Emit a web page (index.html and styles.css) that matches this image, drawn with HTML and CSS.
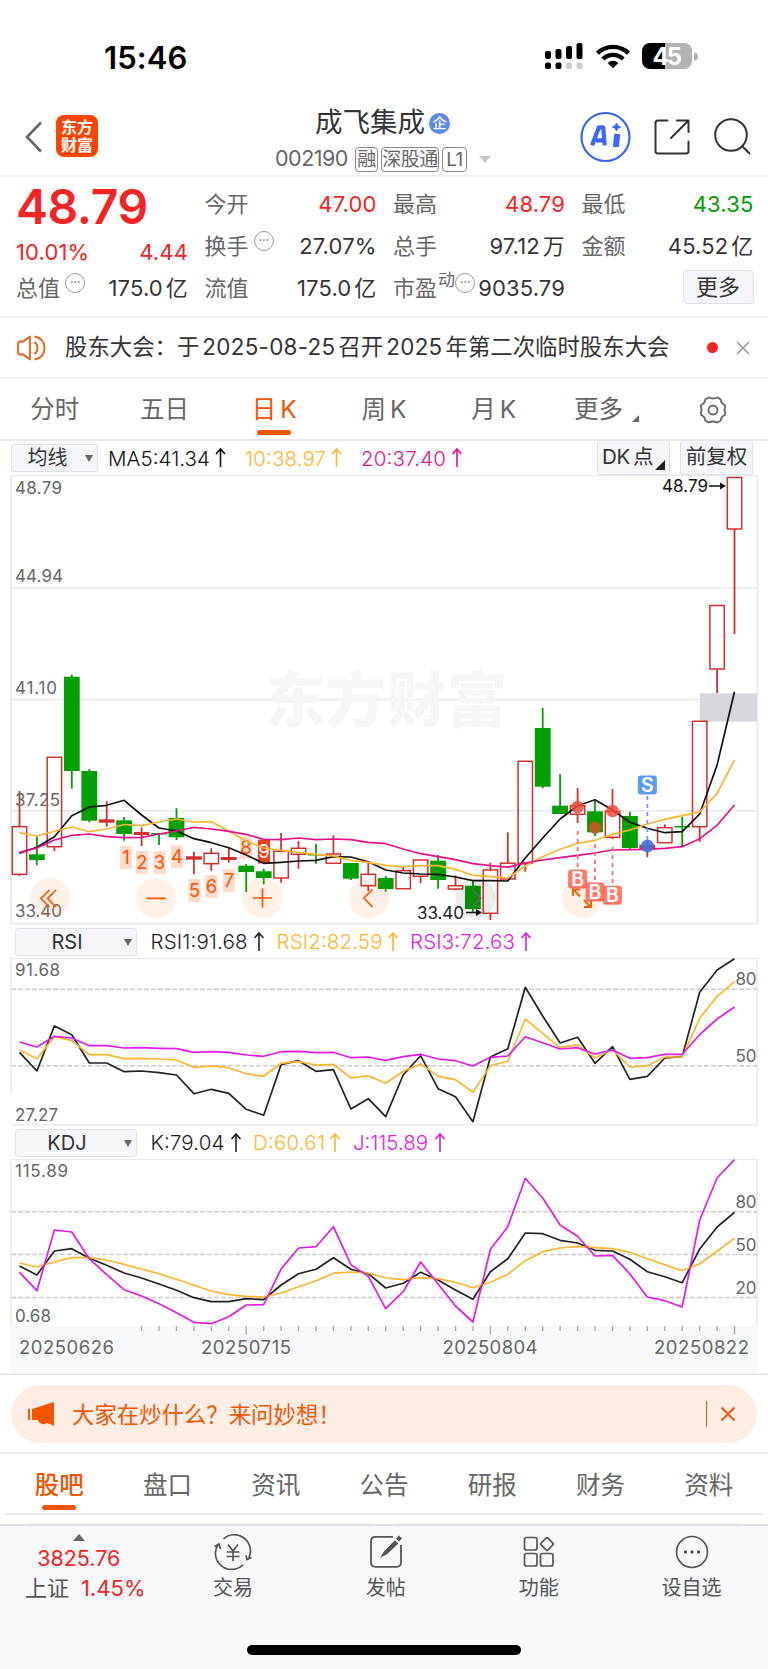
FILE: index.html
```
<!DOCTYPE html>
<html lang="zh-CN">
<head>
<meta charset="utf-8">
<title>成飞集成 002190</title>
<link rel="stylesheet" href="styles.css">
</head>
<body>
<div class="statusbar">
  <span class="clock">15:46</span>
  <svg class="status-icons" width="154" height="30" viewBox="544 41 154 30">
    <g fill="#000"><rect x="545" y="51" width="6" height="8" rx="2"/><rect x="555.5" y="49" width="6" height="10" rx="2"/><rect x="566" y="46" width="6" height="13" rx="2"/><rect x="576.5" y="43" width="6" height="16" rx="2"/><rect x="545" y="62.500" width="6" height="6.500" rx="2"/><rect x="555.500" y="62.500" width="6" height="6.500" rx="2"/></g>
    <g fill="#ccc"><rect x="566" y="62.500" width="6" height="6.500" rx="2"/><rect x="576.500" y="62.500" width="6" height="6.500" rx="2"/></g>
    <g fill="none" stroke="#000" stroke-width="4.300"><path d="M597.500 53.200a22.300 22.300 0 0 1 31 0"/><path d="M602.800 59a14.500 14.500 0 0 1 20.400 0"/></g>
    <path d="M613 68.300l-5.300-5.300a7.500 7.500 0 0 1 10.600 0z"/>
    <path d="M665 43h-15a8 8 0 0 0-8 8v10a8 8 0 0 0 8 8h15z"/>
    <path d="M665 43h19a8 8 0 0 1 8 8v10a8 8 0 0 1-8 8h-19z" fill="#b3b3b3"/>
    <path d="M694 52.500a4 4 0 0 1 0 8z" fill="#b3b3b3"/>
    <text x="652.500" y="65" class="battery" textLength="29.500">45</text>
  </svg>
</div>

<header class="header">
  <svg class="back" width="18" height="32" viewBox="0 0 18 32"><path d="M16 1.500L2 16l14 14.500" fill="none" stroke="#666" stroke-width="2.600"/></svg>
  <div class="logo"><span>东方</span><span>财富</span></div>
  <div class="title">
    <div class="name">成飞集成<span class="badge">企</span></div>
    <div class="code"><span class="num">002190</span><span class="tag t1">融</span><span class="tag t2">深股通</span><span class="tag t3">L1</span><i class="caret"></i></div>
  </div>
  <svg class="actions" width="180" height="56" viewBox="578 109 180 56" fill="none">
    <circle cx="605.500" cy="137" r="24" stroke="#3a66ff" stroke-width="2.200"/>
    <path d="M592 145.300l7-18h4.200l1.500 18M596 140.300h8.500" stroke="#3a66ff" stroke-width="4.200" stroke-linejoin="round"/>
    <path d="M617.300 134l-1.500 13" stroke="#3a66ff" stroke-width="6"/>
    <path d="M616.500 123l1.300 2.700 2.700 1.300-2.700 1.300-1.300 2.700-1.300-2.700-2.700-1.300 2.700-1.300z" fill="#3a66ff" stroke="#3a66ff"/>
    <g stroke="#333" stroke-width="2" stroke-linecap="round" stroke-linejoin="round"><path d="M667.500 120.500H658q-2.500 0-2.500 2.500v28q0 2.500 2.500 2.500h28q2.500 0 2.500-2.500v-9.500"/><path d="M677 120.500h11.500v11.500M688 121l-17 17"/><circle cx="731" cy="135" r="15.800"/><path d="M742.500 146.500l7 7"/></g>
  </svg>
</header>

<section class="quote">
  <div class="col first">
    <strong class="price">48.79</strong>
    <div class="pair up chg"><span>10.01%</span><span>4.44</span></div>
    <div class="pair last"><label>总值<i class="more-dot">···</i></label><span>175.0<u>亿</u></span></div>
  </div>
  <div class="col">
    <div class="pair up"><label>今开</label><span>47.00</span></div>
    <div class="pair"><label>换手<i class="more-dot">···</i></label><span>27.07%</span></div>
    <div class="pair"><label>流值</label><span>175.0<u>亿</u></span></div>
  </div>
  <div class="col">
    <div class="pair up"><label>最高</label><span>48.79</span></div>
    <div class="pair"><label>总手</label><span>97.12<u>万</u></span></div>
    <div class="pair"><label>市盈<sup>动</sup><i class="more-dot tight">···</i></label><span>9035.79</span></div>
  </div>
  <div class="col">
    <div class="pair down"><label>最低</label><span>43.35</span></div>
    <div class="pair"><label>金额</label><span>45.52<u>亿</u></span></div>
    <div class="pair end"><button class="more">更多</button></div>
  </div>
</section>

<section class="notice">
  <svg width="32" height="28" viewBox="0 0 32 28" fill="none" stroke="#f05a0a" stroke-width="1.800" stroke-linejoin="round"><path d="M14 2.500L7.500 7.500H4.500q-2.500 0-2.500 2.500v8q0 2.500 2.500 2.500h3L14 25.500z"/><path d="M18.500 8q3 2 3 6t-3 6M18.500 2.500q10 1.500 10 11.500t-10 11.500"/></svg>
  <span class="notice-text">股东大会：于<b>2025-08-25</b>召开<b>2025</b>年第二次临时股东大会</span>
  <i class="red-dot"></i>
  <svg class="close" width="14" height="14" viewBox="0 0 14 14"><path d="M1 1l12 12M13 1L1 13" stroke="#999" stroke-width="1.600"/></svg>
</section>

<nav class="periods">
  <span>分时</span><span>五日</span><span class="on">日<b>K</b></span><span>周<b>K</b></span><span>月<b>K</b></span><span class="shift">更多<i class="corner"></i></span>
  <span><svg width="30" height="28" viewBox="-15 -14 30 28" fill="none" stroke="#666" stroke-width="1.800" stroke-linejoin="round"><path d="M-4.500-12.500Q0-10.500 4.500-12.500L7.800-10.500Q8-6.500 12-4.800V-1.500Q10.500 0 12 1.500V4.800Q8 6.500 7.800 10.500L4.500 12.500Q0 10.500-4.500 12.500L-7.800 10.500Q-8 6.500-12 4.800V1.500Q-10.500 0-12-1.500V-4.800Q-8-6.500-7.800-10.500z"/><circle r="4.500"/></svg></span>
</nav>

<div class="indicator ma">
  <button class="picker short">均线<i></i></button>
  <svg width="400" height="34" viewBox="100 441 400 34" class="values"><text x="108" y="465.500" fill="#111" textLength="102">MA5:41.34</text><text x="245" y="465.500" fill="#fdb52e" textLength="81">10:38.97</text><text x="361" y="465.500" fill="#e60f8e" textLength="85">20:37.40</text><g fill="none" stroke-width="1.600"><path d="M220.500 467v-18M216 454l4.500-5 4.500 5" stroke="#111"/><path d="M336.500 467v-18M332 454l4.500-5 4.500 5" stroke="#fdb52e"/><path d="M457 467v-18M452.500 454l4.500-5 4.500 5" stroke="#e60f8e"/></g></svg>
  <button class="chip dk">DK<span>点</span><i></i></button>
  <button class="chip">前复权</button>
</div>
<svg id="kline" class="chart" width="768" height="450" viewBox="0 475 768 450"></svg>

<div class="indicator">
  <button class="picker">RSI<i></i></button>
  <svg width="420" height="33" viewBox="140 925 420 33" class="values"><text x="150.500" y="948.500" fill="#222" textLength="97">RSI1:91.68</text><text x="276.500" y="948.500" fill="#fdb52e" textLength="106">RSI2:82.59</text><text x="410" y="948.500" fill="#dd1ae6" textLength="105">RSI3:72.63</text><g fill="none" stroke-width="1.600"><path d="M259 951v-18M254.500 938l4.500-5 4.500 5" stroke="#222"/><path d="M393 951v-18M388.500 938l4.500-5 4.500 5" stroke="#fdb52e"/><path d="M526 951v-18M521.500 938l4.500-5 4.500 5" stroke="#dd1ae6"/></g></svg>
</div>
<svg id="rsi" class="chart" width="768" height="168" viewBox="0 958 768 168"></svg>

<div class="indicator">
  <button class="picker">KDJ<i></i></button>
  <svg width="420" height="33" viewBox="140 1126 420 33" class="values"><text x="150.500" y="1149.500" fill="#222" textLength="74">K:79.04</text><text x="253" y="1149.500" fill="#fdb52e" textLength="72">D:60.61</text><text x="353" y="1149.500" fill="#dd1ae6" textLength="75">J:115.89</text><g fill="none" stroke-width="1.600"><path d="M236 1152v-18M231.500 1139l4.500-5 4.500 5" stroke="#222"/><path d="M335 1152v-18M330.500 1139l4.500-5 4.500 5" stroke="#fdb52e"/><path d="M440 1152v-18M435.500 1139l4.500-5 4.500 5" stroke="#dd1ae6"/></g></svg>
</div>
<svg id="kdj" class="chart" width="768" height="216" viewBox="0 1159 768 216"></svg>

<div class="ask-wrap"><div class="ask">
  <svg width="28" height="24" viewBox="0 0 28 24" fill="#f05500"><path d="M1 7h2v11H1zM5 7l22-7v24l-4-2-3-1q-4 3-8-1l-1-2H5z"/></svg>
  <span class="ask-text">大家在炒什么？来问妙想！</span>
  <i class="bar"></i>
  <svg width="16" height="16" viewBox="0 0 16 16"><path d="M1.500 1.500l13 13M14.500 1.500l-13 13" stroke="#f05500" stroke-width="1.800"/></svg>
</div></div>

<nav class="tabs"><span class="on">股吧</span><span>盘口</span><span>资讯</span><span>公告</span><span>研报</span><span>财务</span><span>资料</span></nav>
<div class="peek"><i></i><i></i></div>

<footer class="bottom">
  <div class="index"><i class="tri"></i><span class="up">3825.76</span><span class="idx"><em>上证</em><span class="up">1.45%</span></span></div>
  <div class="item"><svg width="40" height="36" viewBox="-20 -18 40 36" fill="none" stroke="#555" stroke-width="1.700"><path d="M-9.500-13.200A16.200 16.200 0 0 1 15.800 6M10 12.800A16.200 16.200 0 0 1-15-7.500M-18.500-5.500l4.500-2.500 1.500 5M18.500 5.500l-4.500 2-1-4"/><path d="M-5-7.500l5 6.500 5-6.500M0-1v10M-6.500 0h13M-6.500 4.500h13"/></svg><span>交易</span></div>
  <div class="item"><svg width="40" height="36" viewBox="-20 -18 40 36" fill="none" stroke="#555" stroke-width="1.800"><path d="M7-15.200h-17.500q-4.500 0-4.500 4.500v21q0 4.500 4.500 4.500h21q4.500 0 4.500-4.500V-7"/><path d="M-3.500 3.500L-1-.500 9-10.500l2 2L.500 1.500z" fill="#555"/><path d="M11.500-12l3-3" stroke-width="4"/></svg><span>发帖</span></div>
  <div class="item"><svg width="40" height="36" viewBox="-20 -18 40 36" fill="none" stroke="#555" stroke-width="1.700"><rect x="-14.500" y="-14.500" width="12.500" height="12.500" rx="2"/><rect x="-14.500" y="1.500" width="12.500" height="12.500" rx="2"/><rect x="1.500" y="1.500" width="12.500" height="12.500" rx="2"/><rect x="-4.800" y="-4.800" width="9.600" height="9.600" rx="1" transform="translate(8 -8) rotate(45)"/></svg><span>功能</span></div>
  <div class="item"><svg width="40" height="36" viewBox="-20 -18 40 36" fill="none" stroke="#555" stroke-width="1.700"><circle r="15.500"/><g fill="#555" stroke="none"><circle cx="-6.500" r="1.700"/><circle r="1.700"/><circle cx="6.500" r="1.700"/></g></svg><span>设自选</span></div>
  <i class="home"></i>
</footer>
<script src="chart.js"></script>
</body>
</html>
```

FILE: styles.css
```
* { box-sizing: border-box; }
body { margin: 0; width: 768px; background: #fff; color: #333; font-family: Inter, "Noto Sans CJK SC", sans-serif; font-size: 22px; line-height: 1; }
i, em { font-style: normal; }
b { font-weight: 400; }
u { text-decoration: none; margin-left: 3px; }
svg { display: block; flex: none; }
button { font: inherit; color: #333; padding: 0; background: #f5f6f9; border: 1px solid #dfe1e8; border-radius: 3px; line-height: 1; display: flex; align-items: center; justify-content: center; }
.up { color: #f52323; }
.down { color: #00a000; }

.statusbar { height: 101px; padding: 41px 70px 0 104px; display: flex; justify-content: space-between; }
.clock { font-size: 31px; font-weight: 600; color: #000; letter-spacing: .1px; line-height: 33px; }
.battery { font: 700 24px Inter, sans-serif; fill: #fff; }

.header { height: 76px; border-bottom: 2px solid #efefef; display: flex; padding: 0 10px 0 25px; }
.back { margin: 20px 13px 0 0; }
.logo { width: 42px; height: 42px; margin-top: 14px; border-radius: 8px; background: #ff4400; color: #fff; font-size: 16px; font-weight: 700; display: flex; flex-direction: column; align-items: center; justify-content: center; gap: 2px; }
.title { flex: 1; padding-left: 4px; display: flex; flex-direction: column; align-items: flex-start; }
.name { margin: 6px 0 0 213px; font-size: 27.5px; height: 32px; display: flex; align-items: center; }
.badge { width: 21px; height: 21px; border-radius: 50%; background: #5d8ce4; color: #fff; font-size: 14px; font-weight: 500; display: flex; align-items: center; justify-content: center; margin-left: 4px; }
.code { margin: 7px 0 0 173px; display: flex; align-items: center; height: 26px; color: #666; font-size: 21.5px; }
.num { width: 80px; letter-spacing: -0.5px; }
.tag { height: 25px; border: 1.500px solid #888; border-radius: 4px; font-size: 19px; display: flex; align-items: center; justify-content: center; margin-right: 3px; letter-spacing: -.5px; white-space: nowrap; }
.t1 { width: 23px; } .t2 { width: 58px; } .t3 { width: 25px; }
.caret { margin-left: 9px; border: 6px solid transparent; border-top: 7px solid #c8c8c8; border-bottom: 0; }
.actions { margin-top: 8px; }

.quote { height: 141px; border-bottom: 2px solid #f1f1f1; padding: 6px 15px 0 16px; display: grid; grid-template-columns: 172px 172px 172px 172px; column-gap: 16.500px; }
.pair { height: 42px; display: flex; justify-content: space-between; align-items: center; letter-spacing: .15px; white-space: nowrap; }
.pair label { color: #666; letter-spacing: 0; display: flex; align-items: center; }
.price { display: block; height: 48px; font-size: 48px; font-weight: 600; color: #f52323; letter-spacing: -.400px; line-height: 48px; }
.chg { height: 42px; }
.last { height: 28px; margin-top: 1px; }
.more-dot { flex: none; width: 20px; height: 20px; border: 1.500px solid #999; border-radius: 50%; margin: -10px 0 0 5px; font-size: 14px; line-height: 15px; letter-spacing: -.5px; color: #777; display: flex; justify-content: center; }
.more-dot.tight { margin-left: 0; }
sup { font-size: 17px; line-height: 1; margin: -16px 0 0 1px; vertical-align: baseline; }
.pair.end { justify-content: flex-end; }
.more { width: 71px; height: 34px; border-radius: 4px; margin-top: -2px; }

.notice { height: 61px; border-bottom: 2px solid #f0f0f0; display: flex; align-items: center; padding: 0 18px 0 16px; }
.notice-text { margin-left: 17px; width: 642px; font-size: 22.400px; white-space: nowrap; }
.notice-text b { margin: 0 3px; letter-spacing: .3px; }
.red-dot { width: 11px; height: 11px; border-radius: 50%; background: #f52323; margin-right: 18px; flex: none; }

.periods { height: 62px; border-bottom: 2px solid #e6e6ec; display: grid; grid-template-columns: repeat(7, 1fr); }
.periods span { height: 61px; display: flex; align-items: center; justify-content: center; font-size: 24.500px; color: #666; position: relative; }
.periods .shift { padding-left: 6px; }
.periods b { margin-left: 4px; }
.periods .on, .tabs .on { color: #f05500; }
.periods .on::after, .tabs .on::after { content: ""; position: absolute; bottom: 5px; left: 50%; width: 34px; height: 5px; margin-left: -17px; border-radius: 3px; background: #f05500; }
.corner { border-left: 7px solid transparent; border-bottom: 7px solid #666; margin: 18px 0 0 9px; }

.indicator { height: 33px; display: flex; padding-left: 15px; }
.indicator.ma { height: 34px; padding-left: 11px; }
.picker { width: 122px; height: 28px; margin-top: 3px; font-size: 20px; position: relative; padding-right: 18px; }
.picker.short { width: 87px; padding-right: 14px; }
.picker i { position: absolute; right: 4px; top: 10px; border: 4.500px solid transparent; border-top: 7px solid #666; border-bottom: 0; }
.indicator .values { margin-left: 3px; }
.ma .values { margin-left: 2px; width: 400px; }
.values text { font: 350 20.500px Inter, sans-serif; }
.chip { height: 34px; width: 73px; font-size: 20.500px; border-top: 0; position: relative; white-space: nowrap; }
.chip.dk { margin: 0 10px 0 97px; padding-right: 12px; letter-spacing: -.3px; }
.chip span { margin-left: 3px; }
.chip i { position: absolute; right: 4px; bottom: 4px; border-left: 10px solid transparent; border-bottom: 10px solid #222; }
.chart text { font-family: Inter, sans-serif; }
.watermark { font-family: "Noto Sans CJK SC", sans-serif !important; font-weight: 900; font-size: 60px; fill: #f6f6f6; }

.ask-wrap { height: 79px; padding: 10px 11px 0; border-bottom: 2px solid #ececec; }
.ask { height: 58px; border-radius: 29px; background: #feede5; display: flex; align-items: center; padding: 0 21px 0 16px; color: #f05500; }
.ask-text { margin-left: 17px; flex: 1; font-size: 22.400px; margin-top: 3px; }
.bar { width: 1px; height: 26px; background: #f05500; margin-right: 13px; }
.tabs { height: 61px; margin: 0 5px; border-bottom: 2px solid #eaeaec; display: flex; }
.tabs span { flex: 1; display: flex; align-items: center; justify-content: center; font-size: 24.500px; color: #666; position: relative; padding-top: 3px; }
.tabs .on { font-weight: 500; }
.tabs .on::after { bottom: 3px; }
.peek { height: 9px; padding: 8px 26px 0; display: flex; gap: 20px; }
.peek i { flex: 1; height: 1px; background: #ffe9e2; }

.bottom { height: 145px; border-top: 2px solid #dfe1e8; background: #f7f8fa; display: grid; grid-template-columns: 156.500px repeat(4, 152.900px); position: relative; }
.index { display: flex; flex-direction: column; align-items: center; padding: 8px 0 0 1px; }
.tri { border: 6px solid transparent; border-bottom: 7px solid #666; border-top: 0; }
.index > .up { margin-top: 7px; font-size: 21.500px; height: 29px; }
.idx { display: flex; gap: 12px; white-space: nowrap; padding-left: 13px; }
.idx em { color: #555; }
.item { display: flex; flex-direction: column; align-items: center; padding-top: 8px; color: #555; font-size: 20px; gap: 8px; }
.home { position: absolute; left: 247px; top: 119px; width: 274px; height: 10px; border-radius: 5px; background: #000; }
```

FILE: chart.js
```
const X0 = 19.5, STEP = 17.44;
const px = i => +(X0 + i * STEP).toFixed(1);
const RED = '#d22f2f', GREEN = '#00a000';
const line = (ys, color, f = y => y) =>
  `<polyline fill="none" stroke="${color}" stroke-width="1.7" stroke-linejoin="round" points="${ys.map((y, i) => px(i) + ',' + f(y).toFixed(1)).join(' ')}"/>`;
const label = (x, y, s, w, size = 17, fill = '#666') =>
  `<text x="${x}" y="${y}" font-size="${size}" fill="${fill}" textLength="${w}">${s}</text>`;

// kind, body top, body bottom, wick top, wick bottom
const candles = [
  ['r',826.7,874.3,791,876],['g',854.3,860,836.7,865.3],['r',757.3,846.7,757,851],['g',676.7,771,674.7,788.7],
  ['g',771,820.7,769,822.3],['x',819.3,822.7,801.3,826.7],['g',820.3,834,817,840.7],['x',832,835,827.3,846],
  ['g',833,834.5,833,845],['g',818,837.3,808.3,840],['x',856.3,859.7,851.7,874.3],['r',853.3,863.7,848.3,870.7],
  ['x',857,860,847.7,862.7],['g',865.7,872,864,892],['g',871.3,878,868.7,884.3],['r',851.3,878,833,882.7],
  ['r',848.3,854.3,840.7,868.7],['g',854,855.5,843.7,863.7],['r',854,863.3,835.3,863],['g',863,878.7,863,880],
  ['r',874.3,885.7,862,891.3],['g',878,889,876,891.7],['r',870.7,888.7,866.7,888],['r',860,876.3,860,883.3],
  ['g',860.7,880,855,888.7],['r',885.7,889,875.3,890.3],['g',885.7,909,880.7,911.7],['r',870,913.3,862.7,920],
  ['r',863.2,879,832.3,879],['r',761.3,863.3,761.3,871.7],['g',728,786.7,708,788.3],['g',805.7,814,774,814],
  ['r',805.7,814.3,788,823],['g',811.3,832.3,800.7,836],['r',811.3,837.3,789,839],['g',816,848,811.7,849],
  ['x',844.7,849,841,857.3],['r',827.7,842.7,824.3,842],['g',826,827.5,816.7,846.7],['r',721.3,826.7,721,842],
  ['r',605.5,669,605.5,693],['r',477.5,529,477.5,634]
];
const ma5 = [853.3,847.3,836.7,815.7,807,805.3,800.3,815,828,831,838.7,842.7,847.7,855,863.3,862.3,861,860.3,856.7,857,861.7,870,873,874,874.3,877,880.7,880.7,881,858,838,819,805.7,799.7,810,822.3,828.3,832.7,831.7,814,765,691.7];
const ma10 = [832.7,836,831.3,827,831.7,829,824.5,825.7,822,819,822,821.7,831,841,848,850.3,852.3,854.3,856,860.3,862.3,865.3,866.7,865.7,865.7,869.3,875.3,876.7,878,866,856.7,849.3,843.3,840.3,834.3,830,824,819.3,815.7,812,793.3,760];
const ma20 = [852.3,848,840,835.3,834,836.7,837.7,837.3,834,831,827.3,829,831.3,834.3,839.3,839.7,838,839.7,839,839.7,842.3,843.7,849,853.7,856.7,859.7,863.7,865.7,867.2,863,860,857.7,855.3,853,850,849.7,849.3,848.3,846.7,838.7,825.3,805];

let k = '<g fill="none" stroke="#e6e8ee" stroke-width="1.5"><rect x="11" y="475.500" width="746.500" height="448"/><path d="M11 588H757M11 699.500H757M11 810.700H757"/></g>';
k += '<text x="265" y="722" class="watermark" textLength="242">东方财富</text>';
k += '<rect x="700" y="693.300" width="57" height="28.300" fill="#d4d7dc"/>';
candles.forEach(([t, a, b, w, z], i) => {
  const x = px(i);
  if (t === 'r') {
    k += `<path d="M${x} ${w}V${a}M${x} ${b}V${Math.max(z, b)}" stroke="${RED}" stroke-width="1.8"/>`;
    k += `<rect x="${x - 7.2}" y="${a}" width="14.4" height="${b - a}" fill="none" stroke="${RED}" stroke-width="1.5"/>`;
  } else {
    const c = t === 'g' ? GREEN : RED;
    k += `<path d="M${x} ${w}V${z}" stroke="${c}" stroke-width="1.8"/><rect x="${x - 7.9}" y="${a}" width="15.8" height="${b - a}" fill="${c}"/>`;
  }
});
[['48.79', 494, 47], ['44.94', 582, 48], ['41.10', 693.5, 42], ['37.25', 805.5, 45], ['33.40', 917, 47]].forEach(([s, y, w]) => k += label(15, y, s, w));

// nine-turn counters
[[1,126,848],[2,142,853],[3,159.500,853],[4,177,847],[5,194.500,881],[6,211.500,877],[7,229,871],[8,246,838]].forEach(([n, x, t]) => {
  k += `<rect x="${x - 6}" y="${t - 2}" width="12" height="23" fill="#ffdccb"/><text x="${x}" y="${t + 16}" font-size="18.500" fill="#ff5000" text-anchor="middle">${n}</text>`;
});
k += '<rect x="258" y="839.500" width="12" height="24" fill="#ea4317"/><text x="264" y="858" font-size="18.500" fill="#fff" text-anchor="middle">9</text>';
k += line(ma5, '#111') + line(ma10, '#fdb52e') + line(ma20, '#e6108e');

// round overlay controls
[50, 156, 262.500, 369, 582].forEach(x => k += `<circle cx="${x}" cy="898" r="20" fill="#ff6a1c" fill-opacity=".1"/>`);
k += '<circle cx="475.500" cy="898" r="20" fill="#000" fill-opacity=".08"/>';
k += '<g fill="none" stroke="#f55500" stroke-width="1.700"><path d="M49.500 890l-8.500 8.500 8.500 8.500M56 890l-8.500 8.500L56 907M146.500 898.300h19M253 898h19M262.500 888.500v19M372.500 889.500l-8.500 8.500 8.500 9"/></g><path d="M472 889.500l8.500 8.500-8.500 9" fill="none" stroke="#666" stroke-width="1.700"/>';
k += '<g fill="none" stroke="#f06000" stroke-width="2"><path d="M580 896.500l-6.500-7M573 896v-6.500h7M584 900l6.500 7M584 907h7v-7"/></g>';

// buy / sell markers
k += '<g fill="none" stroke="#ff6858" stroke-width="1.700" stroke-dasharray="4 4"><path d="M577.600 831v40M595 844v38M612.500 847v38"/></g><path d="M647.400 796v46" stroke="#5b9cf8" stroke-width="1.700" stroke-dasharray="4 4"/>';
k += '<g fill="#f04a38" fill-opacity=".85"><circle cx="577.600" cy="807" r="6.200"/><circle cx="612.500" cy="811" r="6.200"/></g><circle cx="595" cy="827.500" r="6.200" fill="#b85c20"/><circle cx="647.400" cy="846" r="6.500" fill="#3d74dc" fill-opacity=".9"/>';
[[577.600,879],[595,892],[612.500,895.200]].forEach(([x, y]) => k += `<rect x="${x - 9.500}" y="${y - 9.500}" width="19" height="19" rx="3" fill="#ff6252" fill-opacity=".85"/><text x="${x}" y="${y + 7}" font-size="19.500" font-weight="600" fill="#fff" text-anchor="middle">B</text>`);
k += '<rect x="637.900" y="775.500" width="19" height="19" rx="3" fill="#5b9cf8"/><text x="647.400" y="792" font-size="19.500" font-weight="600" fill="#fff" text-anchor="middle">S</text>';
k += label(662, 492, '48.79', 46, 17, '#111') + label(417, 919, '33.40', 47, 17, '#222');
k += '<path d="M709 486h13M466 912.500h13" stroke="#111" stroke-width="1.500"/><path d="M720 482.500l6 3.500-6 3.500zM476 909l6 3.500-6 3.500z" fill="#111"/>';
document.getElementById('kline').innerHTML = k;

const fromTop = y => 920 + y / 3;
const rsi1 = [397,453,318,344,429,429,455,453,458,465,521,508,520,568,586,434,422,454,449,567,536,590,465,407,506,530,605,411,386,202,288,369,352,430,380,478,469,414,410,217,150,116];
const rsi2 = [390,416,350,362,404,404,416,415,417,420,442,438,443,461,469,430,425,435,433,474,467,490,454,432,469,479,517,437,424,297,340,383,374,413,389,441,437,411,411,295,229,185];
const rsi3 = [366,381,349,354,377,377,384,383,385,386,397,395,397,405,409,395,394,398,397,413,411,421,410,403,417,422,438,412,408,350,368,387,383,402,390,415,413,403,403,344,297,261];
const dash = ys => `<path d="${ys.map(y => `M11 ${y}H757`).join('')}" stroke="#cbcbcb" stroke-width="1.600" stroke-dasharray="5 2"/>`;
document.getElementById('rsi').innerHTML =
  '<path d="M11 1094V958.600H757V1124.700H11" fill="none" stroke="#e8e9ed" stroke-width="1.400"/>' + dash([989.2, 1065.7]) +
  label(15, 975.5, '91.68', 45) + label(15, 1120.5, '27.27', 43) + label(735.5, 985, '80', 21) + label(735.5, 1062, '50', 21) +
  line(rsi1, '#222', fromTop) + line(rsi2, '#fdb52e', fromTop) + line(rsi3, '#e11be8', fromTop);

const kk = [1038,1065,993,986,1015,1036,1059,1074,1092,1111,1133,1145,1145,1136,1139,1095,1061,1048,1013,1048,1061,1104,1090,1057,1080,1110,1138,1055,1016,939,941,961,969,991,993,1018,1055,1070,1088,987,921,877];
const dd = [1029,1041,1026,1013,1013,1020,1033,1047,1061,1078,1096,1113,1124,1129,1131,1119,1100,1082,1060,1056,1059,1074,1079,1073,1076,1087,1103,1087,1063,1022,995,984,979,983,986,997,1016,1034,1052,1031,994,955];
const jj = [1057,1112,930,936,1016,1064,1109,1128,1151,1178,1207,1211,1190,1155,1154,1047,984,980,920,1034,1069,1166,1115,1026,1092,1158,1206,988,920,775,834,915,949,1008,1006,1062,1131,1142,1161,900,774,719];
let ticks = '';
for (let i = 7; i < 42; i++) ticks += `M${px(i)} 1326v${i % 14 === 13 ? 8.5 : 5}`;
document.getElementById('kdj').innerHTML =
  '<rect x="11" y="1326" width="746" height="48" fill="#f7f8fa"/><path d="M0 1374.300H768" stroke="#e2e2ea" stroke-width="1.400"/>' +
  '<path d="M11 1326V1159.400H757V1326" fill="none" stroke="#e8e9ed" stroke-width="1.400"/>' + dash([1211.8, 1254.5, 1297.5]) +
  `<path d="${ticks}" stroke="#aaa" stroke-width="1.300"/>` +
  label(15, 1176.5, '115.89', 53) + label(15, 1322, '0.68', 36) + label(735.5, 1208, '80', 21) + label(735.5, 1251, '50', 21) + label(735.5, 1293.500, '20', 21) +
  line(kk, '#222', fromTop) + line(dd, '#fdb52e', fromTop) + line(jj, '#e11be8', fromTop) +
  label(19, 1353.5, '20250626', 95, 18.5) + label(201, 1353.5, '20250715', 90, 18.5) + label(442.5, 1353.5, '20250804', 95, 18.5) + label(654, 1353.5, '20250822', 95, 18.5);
```
